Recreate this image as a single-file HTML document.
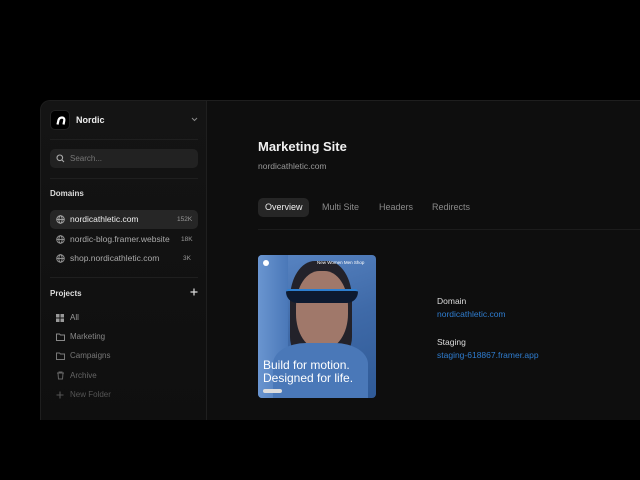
<!DOCTYPE html>
<html><head><meta charset="utf-8"><style>
*{margin:0;padding:0;box-sizing:border-box}
body{width:640px;height:480px;background:#000;font-family:"Liberation Sans",sans-serif;overflow:hidden;position:relative;color:#ddd}
.win{position:absolute;left:40px;top:100px;width:620px;height:320px;background:#0e0e0e;border-radius:10px 0 0 0;border:1px solid #1e1e1e;border-right:none;border-bottom:none;overflow:hidden}
.side{position:absolute;left:0;top:0;width:166px;height:320px;background:linear-gradient(#141414,#0f0f0f);border-right:1px solid #1f1f1f}
.abs{position:absolute}
.logo{left:9px;top:9px;width:20px;height:20px;background:#000;border-radius:5px;border:1px solid #222}
.t{position:absolute;white-space:nowrap}
.hr{position:absolute;left:9px;width:148px;height:1px;background:#1f1f1f}
.search{left:9px;top:48px;width:148px;height:19px;background:#222;border-radius:5px}
.sel{left:9px;top:109px;width:148px;height:19px;background:#262626;border-radius:5px}
.main .tab{position:absolute;top:97px;height:19px;font-size:9px;line-height:19px;color:#8a8a8a}
.n{font-size:6.5px;color:#999}
</style></head><body>
<div class="win">
 <div class="side">
  <div class="abs logo"><svg width="20" height="20" viewBox="0 0 20 20"><path d="M6.5 13.5 L7.5 9 Q8.5 6.5 11 6.5 Q13.8 6.8 13.3 9.5 L12.5 13.5" stroke="#fff" stroke-width="2.2" fill="none"/></svg></div>
  <div class="t" style="left:35px;top:14px;font-size:9px;font-weight:bold;color:#eee">Nordic</div>
  <svg class="abs" style="left:150px;top:16px" width="7" height="5"><path d="M1 1l2.5 2.5L6 1" stroke="#888" fill="none"/></svg>
  <div class="hr" style="top:38px"></div>
  <div class="abs search"></div>
  <svg class="abs" style="left:15px;top:53px" width="9" height="9" viewBox="0 0 9 9"><circle cx="3.8" cy="3.8" r="2.8" stroke="#aaa" fill="none" stroke-width="1.1"/><path d="M6 6 L8 8" stroke="#aaa" stroke-width="1.1"/></svg>
  <div class="t" style="left:29px;top:53px;font-size:8px;color:#777">Search...</div>
  <div class="hr" style="top:77px"></div>
  <div class="t" style="left:9px;top:88px;font-size:8px;font-weight:bold;color:#ddd">Domains</div>
  <div class="abs sel"></div>
  <svg class="abs" style="left:15px;top:114px" width="9" height="9" viewBox="0 0 10 10"><g stroke="#aaa" fill="none" stroke-width="1"><circle cx="5" cy="5" r="4.2"/><ellipse cx="5" cy="5" rx="1.8" ry="4.2"/><path d="M0.8 5h8.4"/></g></svg>
  <div class="t" style="left:29px;top:113px;font-size:8.5px;color:#eee">nordicathletic.com</div>
  <div class="t n" style="left:136px;top:115px">152K</div>
  <svg class="abs" style="left:15px;top:134px" width="9" height="9" viewBox="0 0 10 10"><g stroke="#999" fill="none" stroke-width="1"><circle cx="5" cy="5" r="4.2"/><ellipse cx="5" cy="5" rx="1.8" ry="4.2"/><path d="M0.8 5h8.4"/></g></svg>
  <div class="t" style="left:29px;top:133px;font-size:8.5px;color:#aaa">nordic-blog.framer.website</div>
  <div class="t n" style="left:140px;top:135px">18K</div>
  <svg class="abs" style="left:15px;top:153px" width="9" height="9" viewBox="0 0 10 10"><g stroke="#999" fill="none" stroke-width="1"><circle cx="5" cy="5" r="4.2"/><ellipse cx="5" cy="5" rx="1.8" ry="4.2"/><path d="M0.8 5h8.4"/></g></svg>
  <div class="t" style="left:29px;top:152px;font-size:8.5px;color:#aaa">shop.nordicathletic.com</div>
  <div class="t n" style="left:142px;top:154px">3K</div>
  <div class="hr" style="top:176px"></div>
  <div class="t" style="left:9px;top:188px;font-size:8px;font-weight:bold;color:#ddd">Projects</div>
  <svg class="abs" style="left:149px;top:187px" width="8" height="8"><path d="M4 0.5v7M0.5 4h7" stroke="#ddd" stroke-width="1.2"/></svg>
  <svg class="abs" style="left:15px;top:213px" width="8" height="8"><rect x="0" y="0" width="3.5" height="3.5" fill="#999"/><rect x="4.5" y="0" width="3.5" height="3.5" fill="#999"/><rect x="0" y="4.5" width="3.5" height="3.5" fill="#999"/><rect x="4.5" y="4.5" width="3.5" height="3.5" fill="#999"/></svg>
  <div class="t" style="left:29px;top:212px;font-size:8px;color:#999">All</div>
  <svg class="abs" style="left:15px;top:232px" width="9" height="8"><path d="M0.5 1h3l1 1h4v5.5h-8z" stroke="#888" fill="none"/></svg>
  <div class="t" style="left:29px;top:231px;font-size:8px;color:#888">Marketing</div>
  <svg class="abs" style="left:15px;top:251px" width="9" height="8"><path d="M0.5 1h3l1 1h4v5.5h-8z" stroke="#777" fill="none"/></svg>
  <div class="t" style="left:29px;top:250px;font-size:8px;color:#777">Campaigns</div>
  <svg class="abs" style="left:15px;top:270px" width="9" height="9"><path d="M1 2h7M3 2V1h3v1M2 2l.5 6h4L7 2" stroke="#666" fill="none"/></svg>
  <div class="t" style="left:29px;top:270px;font-size:8px;color:#666">Archive</div>
  <svg class="abs" style="left:15px;top:290px" width="8" height="8"><path d="M4 0.5v7M0.5 4h7" stroke="#555" stroke-width="1.1"/></svg>
  <div class="t" style="left:29px;top:289px;font-size:8px;color:#555">New Folder</div>
 </div>
 <div class="main">
  <div class="t" style="left:217px;top:38px;font-size:13px;font-weight:bold;color:#f0f0f0">Marketing Site</div>
  <div class="t" style="left:217px;top:60px;font-size:8.5px;color:#999">nordicathletic.com</div>
  <div class="abs" style="left:217px;top:97px;width:51px;height:19px;background:#262626;border-radius:5px"></div>
  <div class="tab" style="left:224px;color:#eee">Overview</div>
  <div class="tab" style="left:281px">Multi Site</div>
  <div class="tab" style="left:338px">Headers</div>
  <div class="tab" style="left:391px">Redirects</div>
  <div class="abs" style="left:217px;top:128px;width:403px;height:1px;background:#1c1c1c"></div>
  <div class="abs" style="left:217px;top:154px;width:118px;height:143px;border-radius:4px;overflow:hidden;background:linear-gradient(160deg,#5a86c4,#3f6aa8 50%,#2f5a97)">
   <div class="abs" style="left:0;top:0;width:30px;height:143px;background:linear-gradient(90deg,#6a95d0,#4a78b8)"></div>
   <div class="abs" style="left:32px;top:6px;width:62px;height:95px;border-radius:40% 40% 20% 20%;background:#23222a"></div>
   <div class="abs" style="left:38px;top:16px;width:52px;height:78px;border-radius:45%;background:#a0786a"></div>
   <div class="abs" style="left:28px;top:34px;width:72px;height:14px;border-radius:3px 3px 12px 12px;background:#0d1a30;border-top:2px solid #2d7fd0"></div>
   <div class="abs" style="left:15px;top:88px;width:95px;height:60px;border-radius:35% 35% 0 0;background:#4a78b8"></div>
   <div class="abs" style="left:5px;top:5px;width:6px;height:6px;border-radius:50%;background:#fff"></div>
   <div class="t" style="left:59px;top:5px;font-size:4.5px;color:#fff">New Women Men Shop</div>
   <div class="t" style="left:5px;top:104px;font-size:12px;line-height:13px;color:#fff">Build for motion.<br>Designed for life.</div>
   <div class="abs" style="left:5px;top:134px;width:19px;height:4px;border-radius:2px;background:#ddd"></div>
  </div>
  <div class="t" style="left:396px;top:195px;font-size:8.5px;color:#ddd">Domain</div>
  <div class="t" style="left:396px;top:208px;font-size:8.5px;color:#2f7dd0">nordicathletic.com</div>
  <div class="t" style="left:396px;top:236px;font-size:8.5px;color:#ddd">Staging</div>
  <div class="t" style="left:396px;top:249px;font-size:8.5px;color:#2f7dd0">staging-618867.framer.app</div>
 </div>
</div>
</body></html>
